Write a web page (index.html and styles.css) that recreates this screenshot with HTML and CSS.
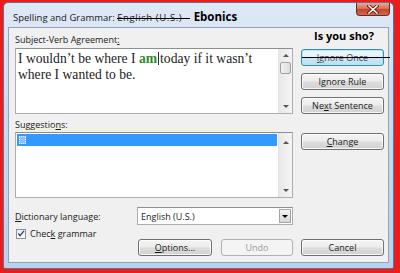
FILE: index.html
```html
<!DOCTYPE html>
<html>
<head>
<meta charset="utf-8">
<link rel="stylesheet" href="styles.css">
</head>
<body>
<div class="frame">
  <div class="window">
    <div class="titlebar">
      <span class="title">Spelling and Grammar: <span class="struck">English (U.S.)</span> <b class="eb">Ebonics</b></span>
      <div class="close">
        <svg width="12" height="9" viewBox="0 0 12 9"><path d="M2 1 L10 8 M10 1 L2 8" stroke="#5a1a10" stroke-width="3.2" stroke-linecap="square"/><path d="M2 1 L10 8 M10 1 L2 8" stroke="#ffffff" stroke-width="1.6" stroke-linecap="square"/></svg>
      </div>
    </div>
    <div class="panel">
      <div class="row r-head">
        <div class="left"><span class="lbl">Subject-Verb Agreement<u>:</u></span></div>
        <div class="right"><b class="sho">Is you sho?</b></div>
      </div>
      <div class="row r-main">
        <div class="left box textbox">
          <div class="text">I wouldn’t be where I <b class="am">am</b><span class="caret"></span>today if it wasn’t<br>where I wanted to be.</div>
          <div class="sbar">
            <span class="arr up"></span>
            <span class="thumb"></span>
            <span class="arr down"></span>
          </div>
        </div>
        <div class="right btncol">
          <div class="btn focus struckbtn"><u>I</u>gnore Once</div>
          <div class="btn">I<u>g</u>nore Rule</div>
          <div class="btn">Ne<u>x</u>t Sentence</div>
        </div>
      </div>
      <div class="row r-lbl">
        <div class="left"><span class="lbl">Suggestio<u>n</u>s:</span></div>
      </div>
      <div class="row r-list">
        <div class="left box listbox">
          <div class="items">
            <div class="sel"><span class="focusrect"></span></div>
          </div>
          <div class="sbar plain">
            <span class="arr up"></span>
            <span class="arr down"></span>
          </div>
        </div>
        <div class="right btncol">
          <div class="btn change"><u>C</u>hange</div>
        </div>
      </div>
      <div class="row r-dict">
        <span class="lbl dictlbl"><u>D</u>ictionary language:</span>
        <div class="combo">
          <span class="combotext">English (U.S.)</span>
          <span class="combobtn"><span class="tri"></span></span>
        </div>
      </div>
      <div class="row r-check">
        <span class="chk"><svg width="9" height="9" viewBox="0 0 9 9"><path d="M1.5 4.5 L3.5 7 L7.8 1.5" fill="none" stroke="#2a4a7a" stroke-width="1.5"/></svg></span>
        <span class="lbl">Chec<u>k</u> grammar</span>
      </div>
      <div class="row r-btns">
        <div class="btn options"><u>O</u>ptions...</div>
        <div class="btn undo disabled">Undo</div>
        <div class="btn cancel">Cancel</div>
      </div>
    </div>
  </div>
</div>
</body>
</html>
```
FILE: styles.css
```css
html, body {
  margin: 0;
  padding: 0;
  background: #ec1c1c;
}
body {
  width: 400px;
  height: 273px;
  overflow: hidden;
  font-family: "Open Sans", "Noto Sans", sans-serif;
  font-size: 9px;
  color: #111;
}
.frame {
  padding: 2px 6px 4px 3px;
  height: 273px;
  box-sizing: border-box;
}
.window {
  height: 267px;
  box-sizing: border-box;
  border: 1px solid #5d7697;
  border-radius: 5px 5px 2px 2px;
  background: linear-gradient(#dfe9f5 0%, #c9dcef 40%, #bcd2ea 100%);
  display: flex;
  flex-direction: column;
  padding: 0 4px 5px 4px;
}
.titlebar {
  height: 24px;
  display: flex;
  align-items: flex-start;
  justify-content: space-between;
  position: relative;
}
.title {
  margin-top: 6px;
  margin-left: 5px;
  font-size: 9.5px;
  color: #1a1a1a;
  white-space: nowrap;
}
.struck {
  position: relative;
  letter-spacing: 0.6px;
}
.struck::after {
  content: "";
  position: absolute;
  left: 0;
  right: -8px;
  top: 7px;
  height: 1px;
  background: #000;
}
.eb {
  font-size: 11.5px;
  font-weight: 700;
  color: #000;
  margin-left: 9px;
}
.close {
  margin-top: 0;
  margin-right: -1px;
  width: 34px;
  height: 13px;
  box-sizing: border-box;
  border: 1px solid #6e2a20;
  border-top: none;
  border-radius: 0 0 4px 4px;
  background: linear-gradient(#e9a695 0%, #d8735c 45%, #c5432a 55%, #d36b4e 100%);
  display: flex;
  align-items: center;
  justify-content: center;
}
.close svg { display: block; }
.panel {
  flex: 1;
  background: #f0f0f0;
  border: 1px solid #8fa3bb;
  display: flex;
  flex-direction: column;
  padding: 0 4px 0 6px;
}
.row {
  display: flex;
  gap: 8px;
}
.left { width: 278px; flex: none; }
.right { width: 83px; flex: none; }
.lbl { white-space: nowrap; color: #1a1a1a; }
.r-head { height: 20px; }
.r-head .left { padding-top: 5px; }
.sho {
  display: block;
  text-align: center;
  font-size: 11px;
  font-weight: 700;
  color: #000;
  margin-top: 0;
  padding-left: 3px;
}
.box {
  box-sizing: border-box;
  border: 1px solid #abadb3;
  border-top-color: #8e8f8f;
  background: #fff;
  display: flex;
}
.r-main { height: 66px; }
.textbox { height: 66px; }
.text {
  flex: 1;
  font-family: "Liberation Serif", "Times New Roman", serif;
  font-size: 13.6px;
  line-height: 16px;
  color: #222;
  padding: 2px 0 0 2px;
  white-space: nowrap;
}
.am { color: #2f8a2f; }
.caret {
  display: inline-block;
  width: 1px;
  height: 13px;
  background: #333;
  vertical-align: -2px;
  margin: 0 1px 0 1px;
}
.sbar {
  width: 13px;
  flex: none;
  background: linear-gradient(90deg, #e8e8e8, #f4f4f4);
  border-left: 1px solid #e3e3e3;
  display: flex;
  flex-direction: column;
  align-items: center;
  position: relative;
}
.arr {
  width: 0;
  height: 0;
  border-left: 3px solid transparent;
  border-right: 3px solid transparent;
}
.arr.up {
  border-bottom: 3px solid #555;
  margin-top: 5px;
}
.arr.down {
  border-top: 3px solid #555;
  margin-top: auto;
  margin-bottom: 5px;
}
.thumb {
  width: 11px;
  height: 12px;
  box-sizing: border-box;
  border: 1px solid #a0a0a0;
  border-radius: 2px;
  background: linear-gradient(90deg, #f2f2f2, #dcdcdc);
  margin-top: 5px;
}
.btncol {
  display: flex;
  flex-direction: column;
  gap: 7px;
  padding-top: 1px;
}
.btn {
  height: 17px;
  box-sizing: border-box;
  border: 1px solid #707070;
  border-radius: 3px;
  background: linear-gradient(#f4f4f4 0%, #ececec 48%, #dddddd 52%, #d2d2d2 100%);
  box-shadow: inset 0 0 0 1px rgba(255,255,255,0.8);
  display: flex;
  align-items: center;
  justify-content: center;
  color: #1a1a1a;
  white-space: nowrap;
  position: relative;
}
.btn.focus {
  border-color: #3c8cae;
  background: linear-gradient(#eef7fc 0%, #e3f2fb 48%, #cbe7f7 52%, #bde0f4 100%);
  box-shadow: inset 0 0 0 1px #b8e4f3;
  color: #444;
}
.struckbtn::after {
  content: "";
  position: absolute;
  left: 0;
  right: -7px;
  top: 7px;
  height: 1px;
  background: #000;
}
.r-lbl { height: 18px; }
.r-lbl .left { padding-top: 4px; }
.r-list { height: 66px; }
.listbox { height: 66px; }
.items {
  flex: 1;
  padding: 1px 1px 0 1px;
}
.sel {
  height: 12px;
  background: #3399ff;
  display: flex;
  align-items: center;
  padding-left: 2px;
}
.focusrect {
  width: 5px;
  height: 6px;
  border: 1px dotted #e8f2ff;
  background: #8cc2f5;
}
.sbar.plain .arr.up { margin-top: 8px; }
.change { margin-top: 0; }
.r-dict {
  margin-top: 9px;
  height: 18px;
  align-items: center;
  gap: 0;
}
.dictlbl { width: 122px; }
.combo {
  width: 156px;
  height: 18px;
  box-sizing: border-box;
  border: 1px solid #abadb3;
  border-top-color: #8e8f8f;
  background: #fff;
  display: flex;
  align-items: center;
  padding: 0 1px 0 3px;
}
.combotext { flex: 1; color: #1a1a1a; }
.combobtn {
  width: 12px;
  height: 14px;
  box-sizing: border-box;
  border: 1px solid #a5a5a5;
  background: linear-gradient(#f3f3f3, #d8d8d8);
  display: flex;
  align-items: center;
  justify-content: center;
}
.tri {
  width: 0;
  height: 0;
  border-left: 3px solid transparent;
  border-right: 3px solid transparent;
  border-top: 3px solid #000;
}
.r-check {
  margin-top: 3px;
  height: 11px;
  align-items: center;
  gap: 4px;
  padding-left: 1px;
}
.chk {
  width: 10px;
  height: 10px;
  box-sizing: border-box;
  border: 1px solid #8f8f8f;
  background: linear-gradient(#e9e9e9, #ffffff);
  display: flex;
  align-items: center;
  justify-content: center;
}
.chk svg { display: block; }
.r-btns {
  margin-top: 0;
  padding-left: 123px;
  gap: 0;
}
.options { width: 74px; }
.undo { width: 72px; margin-left: 9px; }
.cancel { width: 83px; margin-left: 8px; }
.btn.disabled {
  border-color: #adb2b5;
  background: #f4f4f4;
  box-shadow: none;
  color: #9a9a9a;
}
```
